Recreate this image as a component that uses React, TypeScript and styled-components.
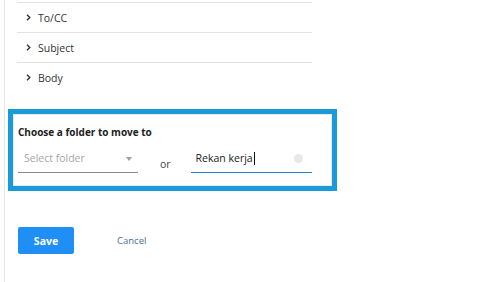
import React from 'react'
import styled, { createGlobalStyle } from 'styled-components'

const GlobalStyle = createGlobalStyle`
  html, body {
    margin: 0;
    padding: 0;
    background: #ffffff;
  }
  body {
    font-family: "Open Sans", "Noto Sans", sans-serif;
    color: #333333;
  }
`;

const Page = styled.div`
  width: 485px;
  height: 282px;
  box-sizing: border-box;
  display: flex;
  overflow: hidden;
`;

const Pane = styled.div`
  margin-left: 4px;
  border-left: 1px solid #e6e6e6;
  padding-left: 12px;
  padding-top: 2px;
  width: 296px;
  display: flex;
  flex-direction: column;
`;

const RuleList = styled.div`
  border-top: 1px solid #e3e3e3;
  width: 295px;
`;

const RuleRow = styled.div<{ last?: boolean }>`
  height: 29px;
  display: flex;
  align-items: center;
  padding-left: 9px;
  gap: 7px;
  font-size: 10.5px;
  color: #333333;
  border-bottom: ${p => (p.last ? 'none' : '1px solid #e3e3e3')};
`;

const MoveBox = styled.div`
  margin-top: 17px;
  margin-left: -9px;
  width: 329px;
  height: 82px;
  box-sizing: border-box;
  border: 5px solid #1a9ad8;
  padding: 0;
`;

const MoveInner = styled.div`
  height: 100%;
  box-sizing: border-box;
  border: 1px solid #e8e8e8;
  padding: 10px 0 0 4px;
`;

const BoxTitle = styled.div`
  font-size: 10px;
  font-weight: 700;
  color: #222222;
  line-height: 14px;
`;

const FieldRow = styled.div`
  display: flex;
  align-items: flex-start;
  margin-top: 12px;
`;

const SelectField = styled.div`
  width: 120px;
  height: 22px;
  box-sizing: border-box;
  border-bottom: 1px solid #8a8a8a;
  display: flex;
  align-items: flex-start;
  justify-content: space-between;
  padding: 0 6px 0 6px;
  font-size: 10.5px;
  color: #a6a6a6;
`;

const Caret = styled.span`
  margin-top: 6px;
  width: 0;
  height: 0;
  border-left: 3px solid transparent;
  border-right: 3px solid transparent;
  border-top: 4px solid #a0a0a0;
`;

const OrLabel = styled.span`
  font-size: 10.5px;
  color: #444444;
  margin: 6px 20px 0 22px;
`;

const TextField = styled.div`
  width: 121px;
  height: 22px;
  box-sizing: border-box;
  border-bottom: 1px solid #2e7fc0;
  display: flex;
  align-items: flex-start;
  justify-content: space-between;
  padding: 0 9px 0 5px;
  font-size: 10.5px;
  color: #222222;
`;

const TypedText = styled.span`
  display: flex;
  align-items: center;
`;

const Cursor = styled.span`
  display: inline-block;
  width: 1px;
  height: 13px;
  background: #111111;
  margin-left: 1px;
`;

const ClearDot = styled.span`
  margin-top: 3px;
  width: 9px;
  height: 9px;
  border-radius: 50%;
  background: #e8e8e8;
`;

const Actions = styled.div`
  display: flex;
  align-items: center;
  margin-top: 36px;
  margin-left: 1px;
  gap: 43px;
`;

const SaveButton = styled.button`
  width: 56px;
  height: 27px;
  border: none;
  border-radius: 2px;
  background: #1f8ef5;
  color: #ffffff;
  font-family: inherit;
  font-size: 10.5px;
  font-weight: 700;
  padding: 0;
  cursor: pointer;
`;

const CancelLink = styled.span`
  font-size: 9.5px;
  color: #4a6f90;
  cursor: pointer;
`;

const Chevron = () => (
  <svg width="5" height="7" viewBox="0 0 5 7">
    <path d="M1 0.8 L3.8 3.5 L1 6.2" fill="none" stroke="#333" strokeWidth="1.4" />
  </svg>
);

const RULES = ['To/CC', 'Subject', 'Body'];

function App() {
  return (
    <>
      <GlobalStyle />
      <Page>
        <Pane>
          <RuleList>
            {RULES.map((rule, i) => (
              <RuleRow key={rule} last={i === RULES.length - 1}>
                <Chevron />
                {rule}
              </RuleRow>
            ))}
          </RuleList>

          <MoveBox>
            <MoveInner>
              <BoxTitle>Choose a folder to move to</BoxTitle>
              <FieldRow>
                <SelectField>
                  Select folder
                  <Caret />
                </SelectField>
                <OrLabel>or</OrLabel>
                <TextField>
                  <TypedText>
                    Rekan kerja
                    <Cursor />
                  </TypedText>
                  <ClearDot />
                </TextField>
              </FieldRow>
            </MoveInner>
          </MoveBox>

          <Actions>
            <SaveButton>Save</SaveButton>
            <CancelLink>Cancel</CancelLink>
          </Actions>
        </Pane>
      </Page>
    </>
  )
}

export default App
